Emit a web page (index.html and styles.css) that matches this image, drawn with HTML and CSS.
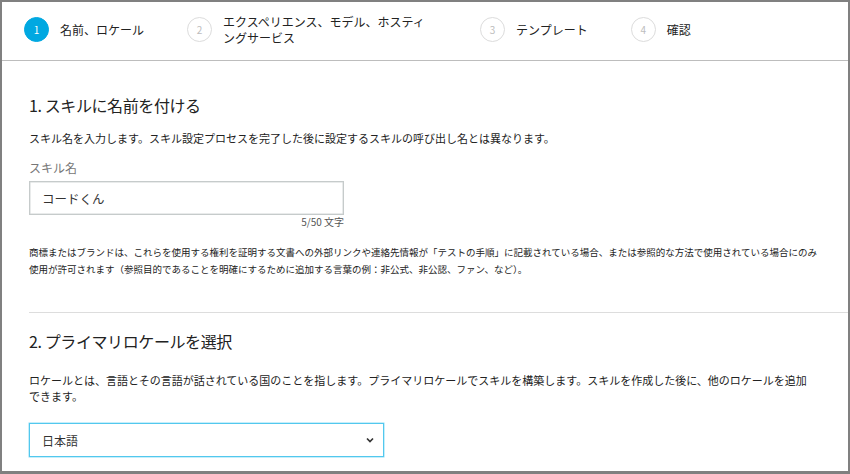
FILE: index.html
```html
<!DOCTYPE html>
<html lang="ja">
<head>
<meta charset="utf-8">
<title>スキルの作成</title>
<link rel="stylesheet" href="styles.css">
</head>
<body>
<div class="frame">
  <header class="steps">
    <div class="step">
      <span class="circle active">1</span>
      <span class="step-label">名前、ロケール</span>
    </div>
    <div class="step">
      <span class="circle">2</span>
      <span class="step-label wide">エクスペリエンス、モデル、ホスティ<br>ングサービス</span>
    </div>
    <div class="step">
      <span class="circle">3</span>
      <span class="step-label">テンプレート</span>
    </div>
    <div class="step">
      <span class="circle">4</span>
      <span class="step-label">確認</span>
    </div>
  </header>

  <main class="content">
    <section class="section first">
      <h2 class="section-title">1. スキルに名前を付ける</h2>
      <p class="desc">スキル名を入力します。スキル設定プロセスを完了した後に設定するスキルの呼び出し名とは異なります。</p>
      <div class="field">
        <label class="field-label">スキル名</label>
        <div class="input">コードくん</div>
        <div class="counter">5/50 文字</div>
      </div>
      <p class="notice">商標またはブランドは、これらを使用する権利を証明する文書への外部リンクや連絡先情報が「テストの手順」に記載されている場合、または参照的な方法で使用されている場合にのみ<br>使用が許可されます（参照目的であることを明確にするために追加する言葉の例：非公式、非公認、ファン、など）。</p>
    </section>

    <section class="section second">
      <h2 class="section-title">2. プライマリロケールを選択</h2>
      <p class="desc two-line">ロケールとは、言語とその言語が話されている国のことを指します。プライマリロケールでスキルを構築します。スキルを作成した後に、他のロケールを追加<br>できます。</p>
      <div class="select">
        <span>日本語</span>
        <svg class="chevron" width="8" height="6" viewBox="0 0 8 6"><polyline points="1,1.5 4,4.5 7,1.5" fill="none" stroke="#333" stroke-width="1.7"/></svg>
      </div>
    </section>
  </main>
</div>
</body>
</html>
```

FILE: styles.css
```css
html, body {
  margin: 0;
  padding: 0;
  background: #ffffff;
}

body {
  font-family: "Noto Sans CJK JP", "Noto Sans", sans-serif;
  color: #222;
}

.frame {
  width: 850px;
  height: 474px;
  box-sizing: border-box;
  border: 2px solid #808080;
  border-bottom-width: 3px;
  overflow: hidden;
  background: #fff;
}

.steps {
  height: 59px;
  border-bottom: 1px solid #bdbdbd;
  display: flex;
  align-items: center;
  gap: 43px;
  padding: 0 0 3px 22px;
  box-sizing: border-box;
}

.step {
  display: flex;
  align-items: center;
  gap: 11px;
}

.circle {
  width: 25px;
  height: 25px;
  box-sizing: border-box;
  border-radius: 50%;
  border: 1.5px solid #dcdcdc;
  color: #bdbdbd;
  font-size: 10px;
  display: flex;
  align-items: center;
  justify-content: center;
  flex: none;
}

.circle.active {
  background: #00a8e1;
  border-color: #00a8e1;
  color: #fff;
}

.step-label {
  font-size: 12px;
  line-height: 16px;
  color: #222;
  white-space: nowrap;
}

.step-label.wide {
  width: 214px;
}

.content {
  padding-left: 27px;
}

.section.first {
  padding-top: 33px;
  padding-bottom: 34px;
  padding-right: 28px;
  border-bottom: 1px solid #dddddd;
}

.section.second {
  padding-top: 17px;
  padding-right: 28px;
}

.section-title {
  margin: 0;
  font-size: 16px;
  line-height: 22px;
  font-weight: 400;
  letter-spacing: -0.4px;
  color: #222;
}

.desc {
  margin: 15px 0 0;
  font-size: 11px;
  line-height: 15px;
  color: #222;
  white-space: nowrap;
}

.desc.two-line {
  margin-top: 20px;
  line-height: 16px;
}

.field {
  width: 315px;
  margin-top: 14px;
}

.field-label {
  display: block;
  font-size: 12px;
  line-height: 16px;
  color: #777;
}

.input {
  margin-top: 5px;
  height: 34px;
  box-sizing: border-box;
  border: 1px solid #c6cbcb;
  box-shadow: inset 0 0 0 0.5px #d4d8d8;
  padding-left: 12px;
  display: flex;
  align-items: center;
  font-size: 12.5px;
  color: #333;
}

.counter {
  margin-top: 1px;
  text-align: right;
  font-size: 10px;
  line-height: 12px;
  color: #555;
}

.notice {
  margin: 16px 0 0;
  font-size: 9.5px;
  line-height: 17px;
  color: #222;
  white-space: nowrap;
}

.select {
  margin-top: 19px;
  width: 355px;
  height: 34px;
  box-sizing: border-box;
  border: 1px solid #52c8ee;
  box-shadow: 0 0 0 0.5px #8fdcf5;
  padding: 0 9px 0 12px;
  display: flex;
  align-items: center;
  justify-content: space-between;
  font-size: 12px;
  color: #333;
}

.chevron {
  display: block;
}
```
